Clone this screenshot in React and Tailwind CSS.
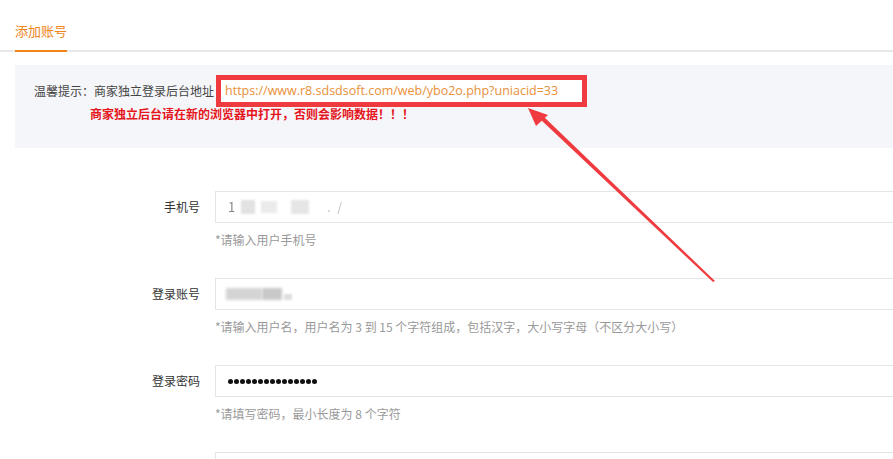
import React from 'react';

const fields = [
  { label: '手机号', kind: 'phone', help: '*请输入用户手机号' },
  { label: '登录账号', kind: 'account', help: '*请输入用户名，用户名为 3 到 15 个字符组成，包括汉字，大小写字母（不区分大小写）' },
  { label: '登录密码', kind: 'password', help: '*请填写密码，最小长度为 8 个字符' },
];

const Blurred = ({ kind }) => {
  if (kind === 'phone') {
    return (
      <div className="flex items-center gap-[6px] pl-[12px]">
        <span className="text-[13px] text-[#888] blur-[0.5px]">1</span>
        <div className="w-[14px] h-[14px] bg-[#e2e2e2] blur-[1px]" />
        <div className="w-[16px] h-[12px] bg-[#ebebeb] blur-[1px]" />
        <div className="w-[18px] h-[14px] bg-[#e6e6e6] blur-[1px] ml-[8px]" />
        <span className="text-[12px] text-[#bbb] ml-[12px] tracking-[2px] blur-[0.5px]">. /</span>
      </div>
    );
  }
  if (kind === 'account') {
    return (
      <div className="flex items-center pl-[10px]">
        <div className="w-[36px] h-[12px] bg-[#d4d4d4] blur-[1.5px]" />
        <div className="w-[20px] h-[12px] bg-[#c8c8c8] blur-[1.5px]" />
        <div className="w-[8px] h-[6px] bg-[#ddd] blur-[1px] ml-[2px] mt-[6px]" />
      </div>
    );
  }
  return (
    <div className="flex items-center gap-[1px] pl-[12px]">
      {Array.from({ length: 15 }).map((_, i) => (
        <div key={i} className="w-[5px] h-[5px] rounded-full bg-[#111]" />
      ))}
    </div>
  );
};

export default function App() {
  return (
    <div className="relative w-[893px] h-[459px] overflow-hidden bg-white text-[12px] text-[#333]" style={{ fontFamily: '"Microsoft YaHei", "Noto Sans CJK SC", sans-serif' }}>
      {/* tab bar */}
      <div className="pt-[22px] pl-[15px] border-b-2 border-[#e8e8e8]">
        <div className="inline-block pb-[10px] border-b-2 border-[#f08519] -mb-[2px] text-[13px] text-[#f08519] leading-[18px]">
          添加账号
        </div>
      </div>

      {/* hint box */}
      <div className="ml-[15px] mt-[13px] h-[83px] bg-[#f5f6fa] pt-[10px] pl-[19px]">
        <div className="flex items-center">
          <span className="text-[12px] text-[#444]">温馨提示：商家独立登录后台地址</span>
          <div className="ml-[2px] w-[371px] h-[32px] border-[5px] border-[#ef3b3f] bg-white flex items-center pl-[4px]">
            <span className="text-[12.5px] text-[#e8903a]" style={{ fontFamily: '"Open Sans", "Noto Sans", sans-serif' }}>
              https://www.r8.sdsdsoft.com/web/ybo2o.php?uniacid=33
            </span>
          </div>
        </div>
        <div className="pl-[56px] -mt-[1px] text-[12px] font-bold text-[#e5151b] leading-[16px]">
          商家独立后台请在新的浏览器中打开，否则会影响数据！！！
        </div>
      </div>

      {/* form */}
      <div className="mt-[43px] flex flex-col gap-[30px]">
        {fields.map((f) => (
          <div key={f.label} className="flex">
            <div className="w-[200px] h-[32px] flex items-center justify-end text-[12px] text-[#333]">{f.label}</div>
            <div className="ml-[15px] flex-1">
              <div className="h-[32px] border border-[#e5e5e5] border-r-0 flex items-center">
                <Blurred kind={f.kind} />
              </div>
              <div className="mt-[8px] text-[12px] text-[#999] leading-[17px]">{f.help}</div>
            </div>
          </div>
        ))}
        <div className="flex">
          <div className="w-[200px]" />
          <div className="ml-[15px] flex-1 h-[32px] border border-[#e5e5e5] border-r-0" />
        </div>
      </div>

      {/* annotation arrow */}
      <svg className="absolute left-0 top-0 pointer-events-none" width="893" height="459">
        <polygon points="715,281 713,282 540,119 543,116" fill="#ef3b3f" />
        <polygon points="528,108 548,115 536,126" fill="#ef3b3f" />
      </svg>
    </div>
  );
}
